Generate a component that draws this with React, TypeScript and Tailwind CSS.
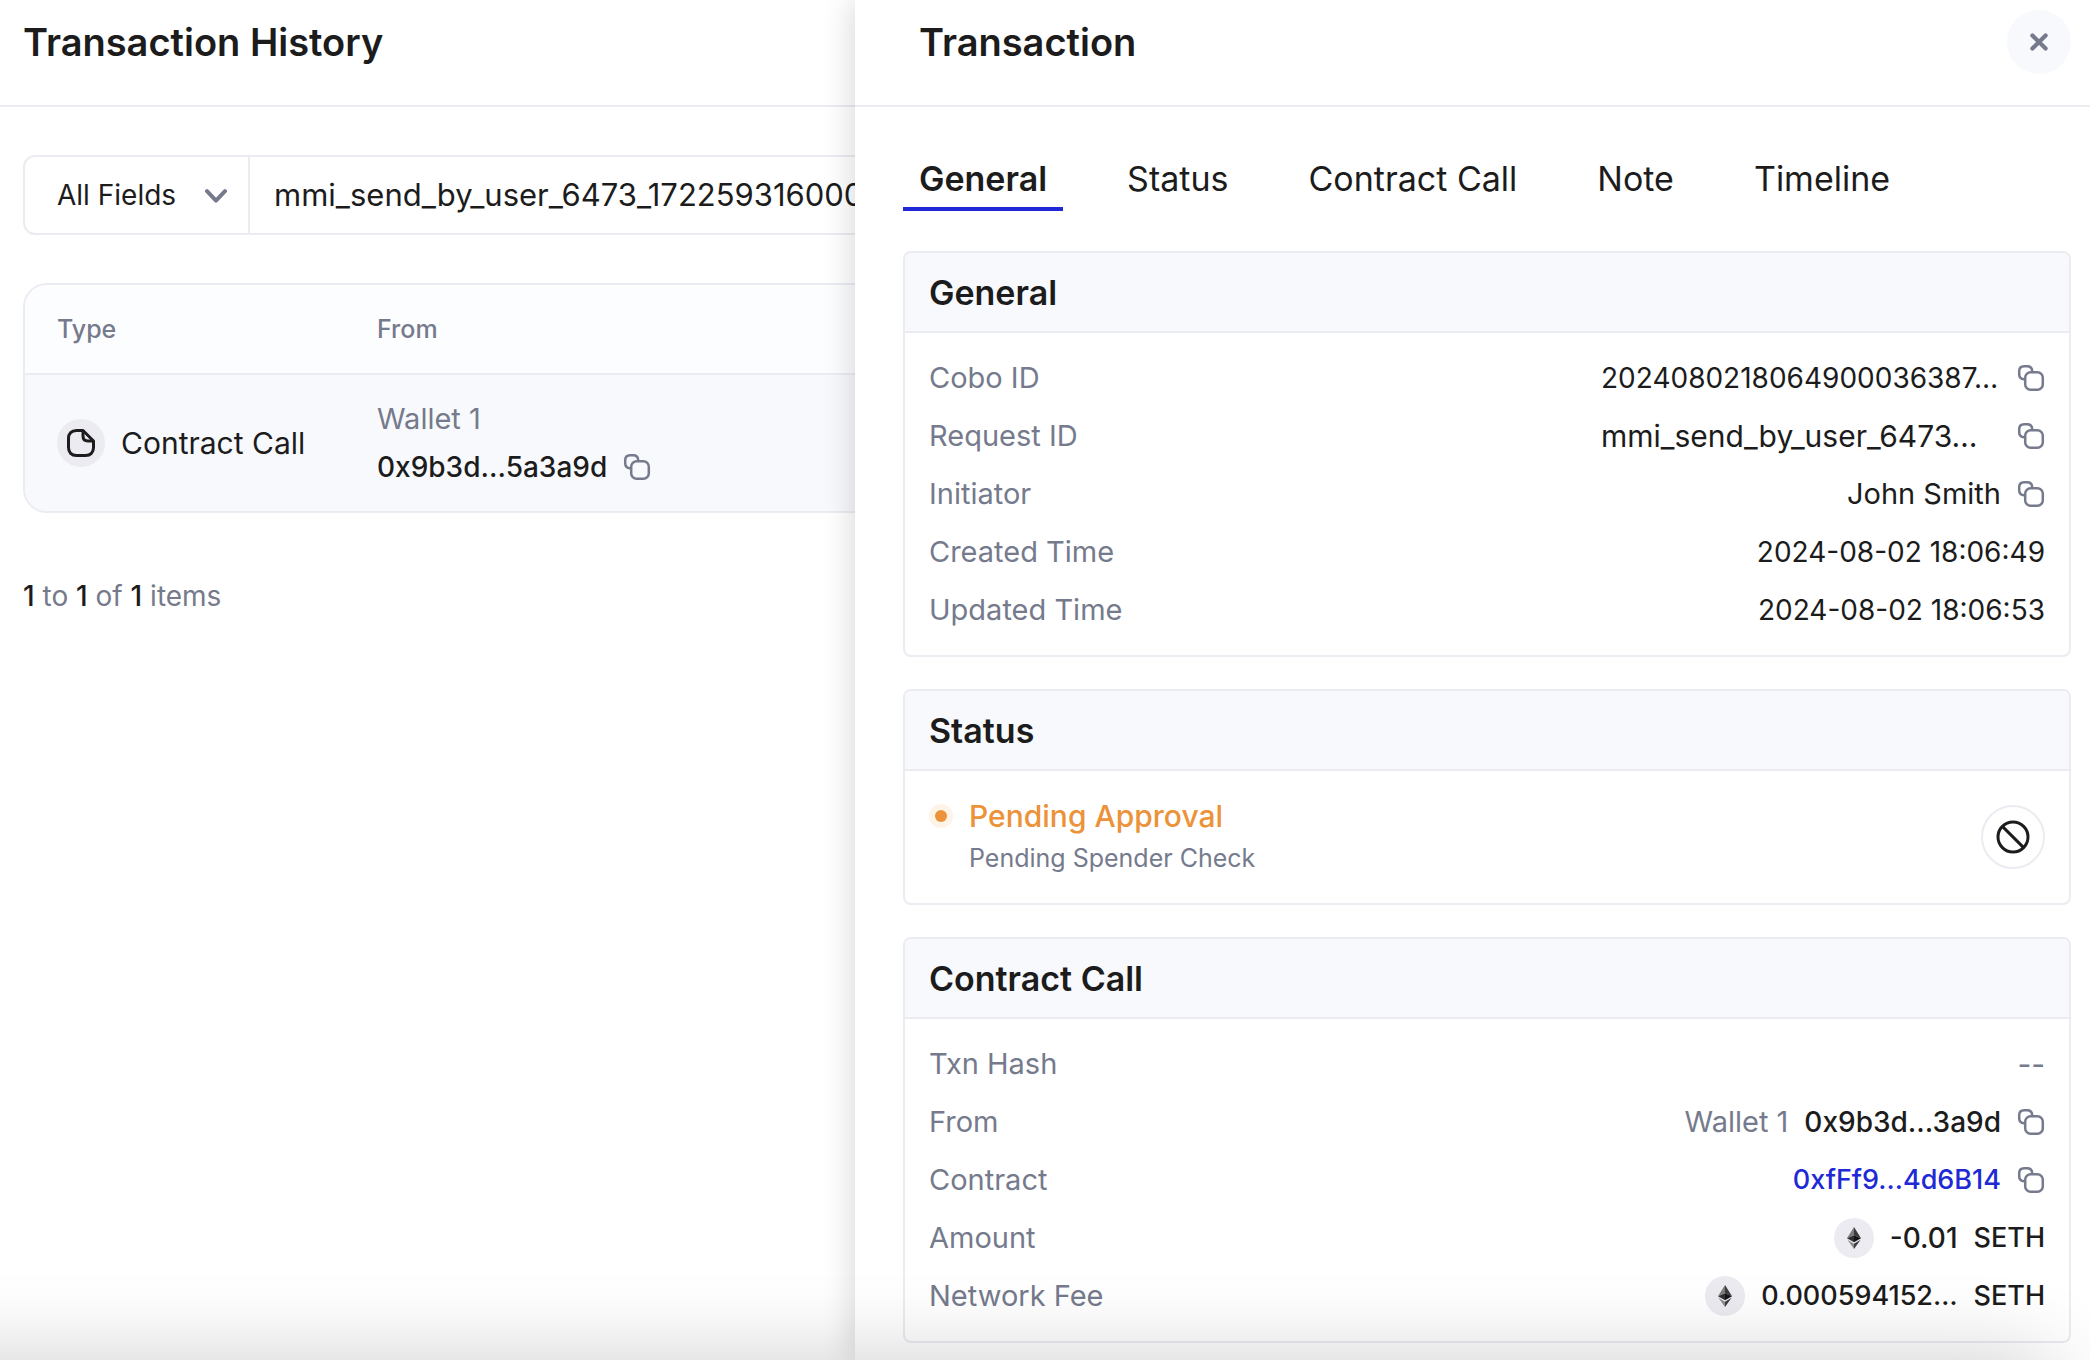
import type { ReactNode } from "react";

const CopyIcon = () => (
  <svg viewBox="0 0 28 28" className="size-7" fill="none" stroke="#757a8c" strokeWidth="2.5" strokeLinejoin="round" strokeLinecap="round">
    <path d="M7.2 15.2C4.2 15 2.2 13.2 2.2 10.2V7.2C2.2 4 4 2.2 7.2 2.2H10.2C13.2 2.2 15 4 15.2 7" />
    <rect x="8.2" y="8.2" width="17.6" height="17.6" rx="5.4" />
  </svg>
);

const CopyButton = ({ label }: { label: string }) => (
  <button type="button" aria-label={label} className="shrink-0">
    <CopyIcon />
  </button>
);

const EthIcon = () => (
  <span className="flex size-10 shrink-0 items-center justify-center rounded-full bg-[#ebebf1]">
    <svg viewBox="0 0 14 22" className="h-[22px] w-[14px]">
      <path d="M7 0 0 11.2 7 8.2Z" fill="#7c7c7c" />
      <path d="M7 0 14 11.2 7 8.2Z" fill="#3c3c3b" />
      <path d="M0 11.2 7 8.2V15.2Z" fill="#303030" />
      <path d="M14 11.2 7 8.2V15.2Z" fill="#141414" />
      <path d="M0.4 12.8 7 16.7V22Z" fill="#8c8c8c" />
      <path d="M13.6 12.8 7 16.7V22Z" fill="#3c3c3b" />
    </svg>
  </span>
);

const Card = ({ title, children }: { title: string; children: ReactNode }) => (
  <section className="overflow-hidden rounded-lg border-2 border-[#ebebf2]">
    <h3 className="flex h-20 items-center border-b-2 border-[#ebebf2] bg-[#f8f9fd] px-6 pt-0.5 text-[34px] leading-10 font-semibold">
      {title}
    </h3>
    {children}
  </section>
);

const Row = ({ label, children }: { label: string; children: ReactNode }) => (
  <div className="flex h-[42px] items-center justify-between">
    <dt className="text-[29px] text-[#757a8c]">{label}</dt>
    <dd className="flex items-center gap-4">{children}</dd>
  </div>
);

const tabs = ["General", "Status", "Contract Call", "Note", "Timeline"];

export default function App() {
  return (
    <div className="relative flex h-screen overflow-hidden bg-white font-['Inter',sans-serif] text-[28px] leading-[42px] text-[#1c1c1c]">
      <main className="w-[855px] shrink-0 overflow-hidden">
        <header className="flex h-[107px] items-center border-b-2 border-[#ebebf2] px-[23px] pb-[21px]">
          <h1 className="text-[38px] font-semibold">Transaction History</h1>
        </header>
        <div className="flex flex-col gap-12 pt-12 pl-[23px]">
          <div className="flex h-20 w-[1200px] rounded-xl border-2 border-[#ebebf2]">
            <div className="relative flex w-[225px] items-center border-r-2 border-[#ebebf2]">
              <select aria-label="Search field" className="h-full w-full appearance-none bg-transparent pl-8 outline-none">
                <option>All Fields</option>
              </select>
              <svg viewBox="0 0 24 14" className="pointer-events-none absolute right-5 mt-0.5 h-3.5 w-6" fill="none" stroke="#757a8c" strokeWidth="4" strokeLinecap="round" strokeLinejoin="round">
                <path d="M3 2.2 12 11.6 21 2.2" />
              </svg>
            </div>
            <input aria-label="Search value" defaultValue="mmi_send_by_user_6473_1722593160000" className="min-w-0 flex-1 bg-transparent px-6 text-[31px] outline-none" />
          </div>
          <div className="w-[1200px] overflow-hidden rounded-3xl border-2 border-[#ebebf2]">
            <table className="w-full table-fixed text-left">
              <thead className="bg-[#fcfdff] text-[25px] text-[#757a8c]">
                <tr className="h-[89px] border-b-2 border-[#ebebf2]">
                  <th className="w-80 pl-8 font-medium">Type</th>
                  <th className="pl-8 font-medium">From</th>
                </tr>
              </thead>
              <tbody className="bg-[#f8f9fd]">
                <tr className="h-[137px]">
                  <td className="pl-8">
                    <div className="flex items-center gap-4">
                      <span className="flex size-12 items-center justify-center rounded-full bg-[#ebebf1]">
                        <svg viewBox="0 0 28 28" className="size-7" fill="none" stroke="#1c1c1c" strokeWidth="3" strokeLinejoin="round">
                          <path d="M16 1.5H9.5C4.5 1.5 1.5 4.5 1.5 9.5V18.5C1.5 23.5 4.5 26.5 9.5 26.5H18.5C23.5 26.5 26.5 23.5 26.5 18.5V12Z" />
                          <path d="M16 1.5V7C16 10.4 17.6 12 21 12H26.5" />
                        </svg>
                      </span>
                      <span className="text-[30px]">Contract Call</span>
                    </div>
                  </td>
                  <td className="pl-8">
                    <div className="flex h-12 items-center text-[29px] text-[#757a8c]">Wallet 1</div>
                    <div className="flex h-12 items-center gap-4 font-medium">
                      0x9b3d...5a3a9d
                      <CopyButton label="Copy address" />
                    </div>
                  </td>
                </tr>
              </tbody>
            </table>
          </div>
          <p className="pt-3.5 text-[#757a8c]">
            <b className="font-medium text-[#1c1c1c]">1</b> to <b className="font-medium text-[#1c1c1c]">1</b> of{" "}
            <b className="font-medium text-[#1c1c1c]">1</b> items
          </p>
        </div>
      </main>

      <aside className="z-10 min-w-0 flex-1 bg-white shadow-[-4px_0_28px_rgba(0,0,0,0.14)]">
        <header className="flex h-[107px] items-center justify-between border-b-2 border-[#ebebf2] pr-[19px] pb-[21px] pl-16">
          <h2 className="text-[38px] font-semibold">Transaction</h2>
          <button type="button" aria-label="Close" className="flex size-16 items-center justify-center rounded-full bg-[#f8f9fd]">
            <svg viewBox="0 0 18 18" className="size-[18px]" fill="none" stroke="#757a8c" strokeWidth="4.2" strokeLinecap="round">
              <path d="M2.4 2.4 15.6 15.6M15.6 2.4 2.4 15.6" />
            </svg>
          </button>
        </header>
        <div className="pr-[19px] pl-12">
          <nav role="tablist" className="my-10 flex gap-12">
            {tabs.map((tab, i) => (
              <button
                key={tab}
                type="button"
                role="tab"
                aria-selected={i === 0}
                className={
                  i === 0
                    ? "h-16 border-b-4 border-[#2029d5] px-4 pt-1 text-[34px] font-semibold"
                    : "h-16 border-b-4 border-transparent px-4 pt-1 text-[34px]"
                }
              >
                {tab}
              </button>
            ))}
          </nav>
          <div className="flex flex-col gap-8">
            <Card title="General">
              <dl className="flex flex-col gap-4 p-6">
                <Row label="Cobo ID">
                  <span className="w-[400px]">2024080218064900036387…</span>
                  <CopyButton label="Copy Cobo ID" />
                </Row>
                <Row label="Request ID">
                  <span className="w-[400px] text-[30px]">mmi_send_by_user_6473…</span>
                  <CopyButton label="Copy request ID" />
                </Row>
                <Row label="Initiator">
                  <span className="text-[29px]">John Smith</span>
                  <CopyButton label="Copy initiator" />
                </Row>
                <Row label="Created Time">2024-08-02 18:06:49</Row>
                <Row label="Updated Time">2024-08-02 18:06:53</Row>
              </dl>
            </Card>
            <Card title="Status">
              <div className="flex items-center justify-between p-6">
                <div className="flex gap-4">
                  <span className="mt-[9px] flex size-6 items-center justify-center rounded-full bg-[#fdf4e7]">
                    <span className="size-3 rounded-full bg-[#ec9239]" />
                  </span>
                  <div>
                    <div className="text-[30px] font-medium text-[#ec9239]">Pending Approval</div>
                    <div className="text-[25px] text-[#757a8c]">Pending Spender Check</div>
                  </div>
                </div>
                <button type="button" aria-label="Cancel transaction" className="flex size-16 items-center justify-center rounded-full border-2 border-[#ebebf2]">
                  <svg viewBox="0 0 34 34" className="size-[34px]" fill="none" stroke="#1c1c1c" strokeWidth="3">
                    <circle cx="17" cy="17" r="15" />
                    <path d="M6.4 6.4 27.6 27.6" />
                  </svg>
                </button>
              </div>
            </Card>
            <Card title="Contract Call">
              <dl className="flex flex-col gap-4 p-6">
                <Row label="Txn Hash">
                  <span className="text-[30px] text-[#757a8c]">--</span>
                </Row>
                <Row label="From">
                  <span className="text-[29px] text-[#757a8c]">Wallet 1</span>
                  <span className="font-medium">0x9b3d...3a9d</span>
                  <CopyButton label="Copy sender address" />
                </Row>
                <Row label="Contract">
                  <a href="#contract" className="text-[27px] font-medium text-[#2029d5]">0xfFf9...4d6B14</a>
                  <CopyButton label="Copy contract address" />
                </Row>
                <Row label="Amount">
                  <EthIcon />
                  <span className="font-medium">-0.01</span>
                  <span className="text-[27px] font-medium">SETH</span>
                </Row>
                <Row label="Network Fee">
                  <EthIcon />
                  <span className="text-[27px] font-medium">0.000594152…</span>
                  <span className="text-[27px] font-medium">SETH</span>
                </Row>
              </dl>
            </Card>
          </div>
        </div>
      </aside>
      <div className="pointer-events-none absolute -bottom-40 -left-40 right-10 z-20 h-40 shadow-[0_0_88px_rgba(0,0,0,0.2)]" />
    </div>
  );
}
